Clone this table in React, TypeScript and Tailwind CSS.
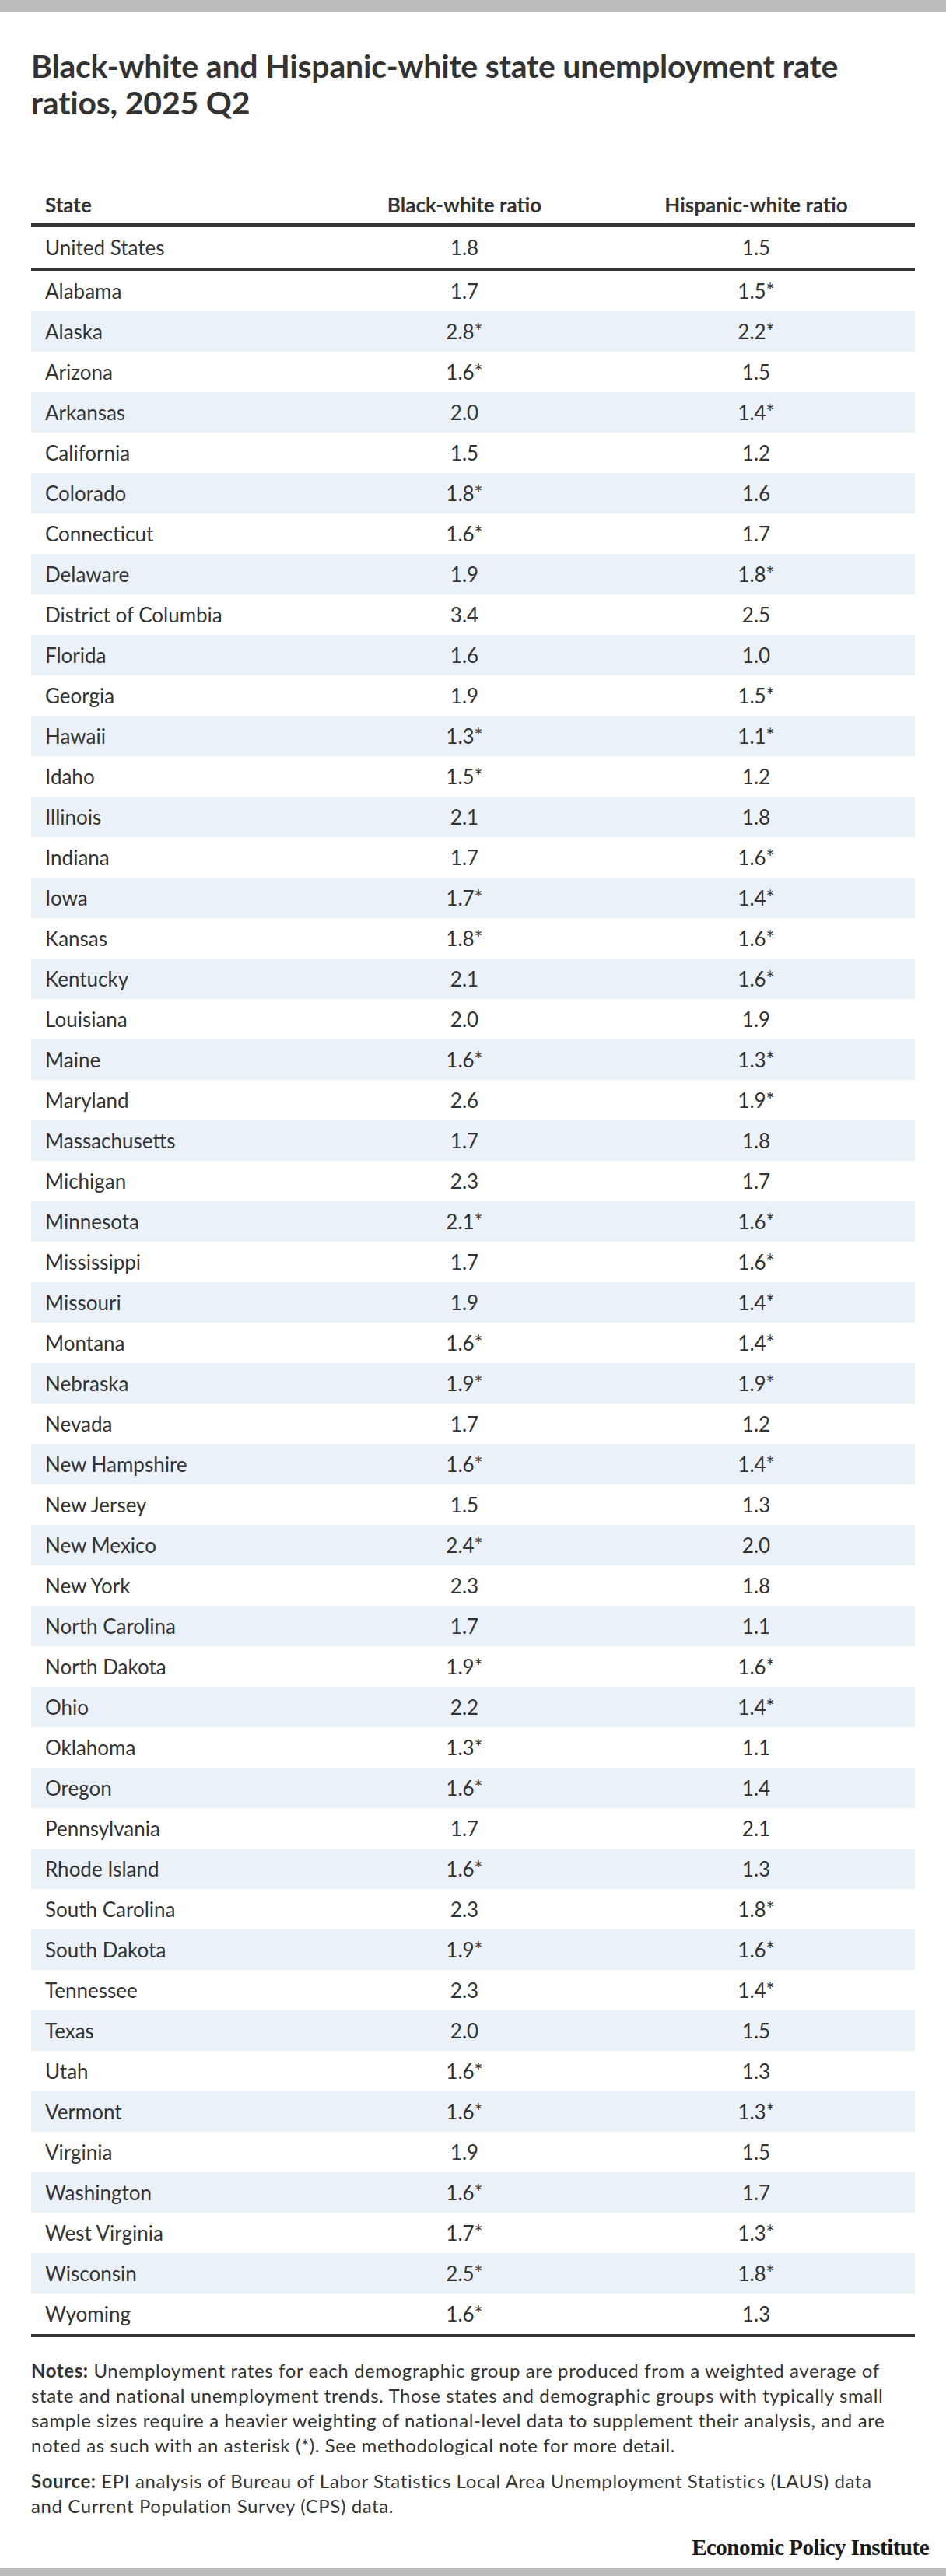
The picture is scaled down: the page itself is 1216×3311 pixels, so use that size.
const rows: [string, string, string][] = [
  ["Alabama", "1.7", "1.5*"],
  ["Alaska", "2.8*", "2.2*"],
  ["Arizona", "1.6*", "1.5"],
  ["Arkansas", "2.0", "1.4*"],
  ["California", "1.5", "1.2"],
  ["Colorado", "1.8*", "1.6"],
  ["Connecticut", "1.6*", "1.7"],
  ["Delaware", "1.9", "1.8*"],
  ["District of Columbia", "3.4", "2.5"],
  ["Florida", "1.6", "1.0"],
  ["Georgia", "1.9", "1.5*"],
  ["Hawaii", "1.3*", "1.1*"],
  ["Idaho", "1.5*", "1.2"],
  ["Illinois", "2.1", "1.8"],
  ["Indiana", "1.7", "1.6*"],
  ["Iowa", "1.7*", "1.4*"],
  ["Kansas", "1.8*", "1.6*"],
  ["Kentucky", "2.1", "1.6*"],
  ["Louisiana", "2.0", "1.9"],
  ["Maine", "1.6*", "1.3*"],
  ["Maryland", "2.6", "1.9*"],
  ["Massachusetts", "1.7", "1.8"],
  ["Michigan", "2.3", "1.7"],
  ["Minnesota", "2.1*", "1.6*"],
  ["Mississippi", "1.7", "1.6*"],
  ["Missouri", "1.9", "1.4*"],
  ["Montana", "1.6*", "1.4*"],
  ["Nebraska", "1.9*", "1.9*"],
  ["Nevada", "1.7", "1.2"],
  ["New Hampshire", "1.6*", "1.4*"],
  ["New Jersey", "1.5", "1.3"],
  ["New Mexico", "2.4*", "2.0"],
  ["New York", "2.3", "1.8"],
  ["North Carolina", "1.7", "1.1"],
  ["North Dakota", "1.9*", "1.6*"],
  ["Ohio", "2.2", "1.4*"],
  ["Oklahoma", "1.3*", "1.1"],
  ["Oregon", "1.6*", "1.4"],
  ["Pennsylvania", "1.7", "2.1"],
  ["Rhode Island", "1.6*", "1.3"],
  ["South Carolina", "2.3", "1.8*"],
  ["South Dakota", "1.9*", "1.6*"],
  ["Tennessee", "2.3", "1.4*"],
  ["Texas", "2.0", "1.5"],
  ["Utah", "1.6*", "1.3"],
  ["Vermont", "1.6*", "1.3*"],
  ["Virginia", "1.9", "1.5"],
  ["Washington", "1.6*", "1.7"],
  ["West Virginia", "1.7*", "1.3*"],
  ["Wisconsin", "2.5*", "1.8*"],
  ["Wyoming", "1.6*", "1.3"],
];

const cols = "grid grid-cols-[386px_342px_408px]";

function Row({ cells, striped }: { cells: [string, string, string]; striped?: boolean }) {
  return (
    <div className={`${cols} h-[52px] items-center text-[26px] ${striped ? "bg-[#ebf1f9]" : ""}`}>
      <div className="pl-[18px]">{cells[0]}</div>
      <div className="text-center">{cells[1]}</div>
      <div className="text-center">{cells[2]}</div>
    </div>
  );
}

export default function App() {
  return (
    <div className="min-h-screen bg-white text-[#333] font-['Lato','Liberation_Sans',sans-serif] flex flex-col">
      <div className="h-4 bg-[#bcbcbc]" />

      <div className="px-10 flex flex-col flex-1">
        <h1 className="mt-[45px] text-[41px] leading-[47px] font-bold tracking-[-0.2px]">
          Black-white and Hispanic-white state unemployment rate ratios, 2025 Q2
        </h1>

        <div className="mt-[93px]">
          {/* header */}
          <div className={`${cols} border-b-[6px] border-[#333] pb-2 text-[26px] leading-[30px] font-bold`}>
            <div className="pl-[18px]">State</div>
            <div className="text-center">Black-white ratio</div>
            <div className="text-center">Hispanic-white ratio</div>
          </div>

          <div className="border-b-4 border-[#333]">
            <Row cells={["United States", "1.8", "1.5"]} />
          </div>

          <div className="border-b-4 border-[#333]">
            {rows.map((r, i) => (
              <Row key={r[0]} cells={r} striped={i % 2 === 1} />
            ))}
          </div>
        </div>

        <div className="mt-[27px] text-[24px] leading-[32px] tracking-[0.6px] whitespace-nowrap">
          <p>
            <span className="font-bold">Notes:</span> Unemployment rates for each demographic group are produced
            from a weighted average of
            <br />
            state and national unemployment trends. Those states and demographic groups with typically small
            <br />
            sample sizes require a heavier weighting of national-level data to supplement their analysis, and are
            <br />
            noted as such with an asterisk (*). See methodological note for more detail.
          </p>
          <p className="mt-[14px]">
            <span className="font-bold">Source:</span> EPI analysis of Bureau of Labor Statistics Local Area
            Unemployment Statistics (LAUS) data
            <br />
            and Current Population Survey (CPS) data.
          </p>
        </div>

        <div className="mt-[19px] flex justify-end -mr-[18px]">
          <span className="font-['Liberation_Serif',serif] font-bold text-[29px] leading-[36px] tracking-[-0.5px] text-[#1a1a1a]">
            Economic Policy Institute
          </span>
        </div>

        <div className="flex-1" />
      </div>

      <div className="h-[10px] bg-[#bcbcbc]" />
    </div>
  );
}
